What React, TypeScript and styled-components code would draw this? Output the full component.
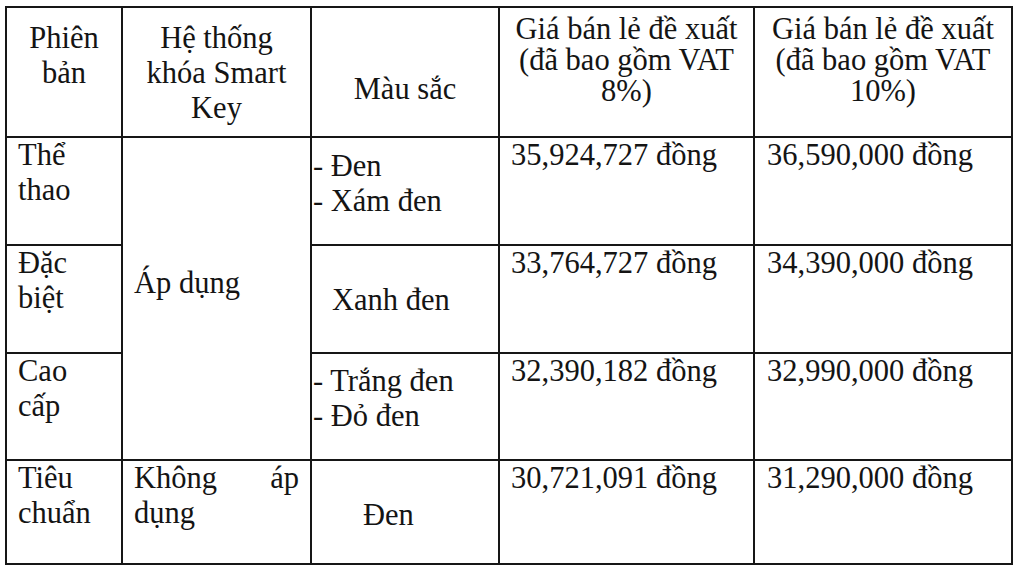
import React from "react";
import styled, { createGlobalStyle } from "styled-components";

const GlobalStyle = createGlobalStyle`
  html, body {
    margin: 0;
    padding: 0;
    background: #ffffff;
  }
  body {
    font-family: "Liberation Serif", "Times New Roman", serif;
    color: #141414;
  }
`;

const Page = styled.div`
  width: 1020px;
  height: 573px;
  padding: 6px 0 0 5px;
  box-sizing: border-box;
  background: #ffffff;
`;

const Table = styled.div`
  display: grid;
  grid-template-columns: 116px 189px 188px 255px 258px;
  grid-template-rows: 130px 108px 108px 107px 104px;
  width: max-content;
  border-left: 2px solid #161616;
  border-top: 2px solid #161616;
  font-size: 30.5px;
  line-height: 35px;
`;

const Cell = styled.div<{ $pt?: number; $pl?: number; $pr?: number }>`
  box-sizing: border-box;
  border-right: 2px solid #161616;
  border-bottom: 2px solid #161616;
  padding-top: ${(p) => p.$pt ?? 0}px;
  padding-left: ${(p) => p.$pl ?? 11}px;
  padding-right: ${(p) => p.$pr ?? 11}px;
  overflow: hidden;
`;

const HeaderCell = styled(Cell)`
  text-align: center;
`;

const PriceHeaderCell = styled(Cell)`
  text-align: center;
  line-height: 31px;
`;

const VersionCell = styled(Cell)`
  text-align: left;
`;

const KeyCell = styled(Cell)<{ $span?: number }>`
  text-align: justify;
  grid-row: ${(p) => (p.$span ? `span ${p.$span}` : "auto")};
`;

const ColorCell = styled(Cell)`
  text-align: left;
`;

const ColorLine = styled.div`
  white-space: pre;
`;

const PriceCell = styled(Cell)`
  text-align: left;
  white-space: nowrap;
`;

type Row = {
  version: [string, string];
  colors: string[];
  colorPad: { pt: number; pl: number };
  p8: string;
  p10: string;
};

const rows: Row[] = [
  {
    version: ["Thể", "thao"],
    colors: ["- Đen", "- Xám đen"],
    colorPad: { pt: 11, pl: 1 },
    p8: "35,924,727 đồng",
    p10: "36,590,000 đồng",
  },
  {
    version: ["Đặc", "biệt"],
    colors: ["Xanh đen"],
    colorPad: { pt: 37, pl: 20 },
    p8: "33,764,727 đồng",
    p10: "34,390,000 đồng",
  },
  {
    version: ["Cao", "cấp"],
    colors: ["- Trắng đen", "- Đỏ đen"],
    colorPad: { pt: 10, pl: 1 },
    p8: "32,390,182 đồng",
    p10: "32,990,000 đồng",
  },
  {
    version: ["Tiêu", "chuẩn"],
    colors: ["Đen"],
    colorPad: { pt: 37, pl: 51 },
    p8: "30,721,091 đồng",
    p10: "31,290,000 đồng",
  },
];

export default function App() {
  return (
    <>
      <GlobalStyle />
      <Page>
        <Table>
          <HeaderCell $pt={13} $pl={4} $pr={4}>
            Phiên
            <br />
            bản
          </HeaderCell>
          <HeaderCell $pt={13}>
            Hệ thống
            <br />
            khóa Smart
            <br />
            Key
          </HeaderCell>
          <HeaderCell $pt={64}>Màu sắc</HeaderCell>
          <PriceHeaderCell $pt={6} $pl={1} $pr={1}>
            Giá bán lẻ đề xuất
            <br />
            (đã bao gồm VAT
            <br />
            8%)
          </PriceHeaderCell>
          <PriceHeaderCell $pt={6} $pl={1} $pr={1}>
            Giá bán lẻ đề xuất
            <br />
            (đã bao gồm VAT
            <br />
            10%)
          </PriceHeaderCell>

          {rows.map((r, i) => (
            <React.Fragment key={r.p8}>
              <VersionCell $pl={11}>
                {r.version[0]}
                <br />
                {r.version[1]}
              </VersionCell>
              {i === 0 && (
                <KeyCell $span={3} $pt={128}>
                  Áp dụng
                </KeyCell>
              )}
              {i === 3 && <KeyCell>Không áp dụng</KeyCell>}
              <ColorCell $pt={r.colorPad.pt} $pl={r.colorPad.pl} $pr={2}>
                {r.colors.map((c) => (
                  <ColorLine key={c}>{c}</ColorLine>
                ))}
              </ColorCell>
              <PriceCell $pl={11}>{r.p8}</PriceCell>
              <PriceCell $pl={12}>{r.p10}</PriceCell>
            </React.Fragment>
          ))}
        </Table>
      </Page>
    </>
  );
}
